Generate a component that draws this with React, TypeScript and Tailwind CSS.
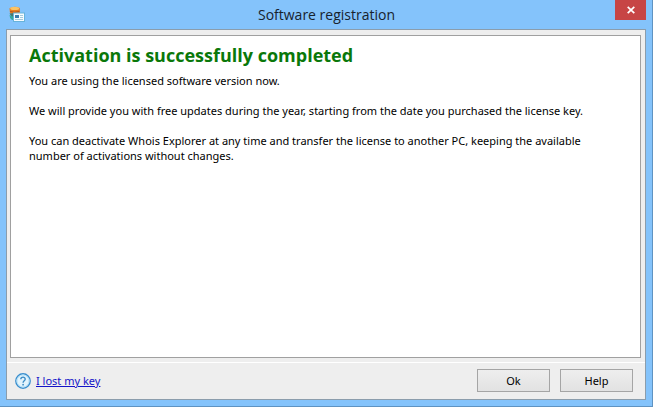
import React from 'react';

const AppIcon: React.FC = () => (
  <svg className="h-4 w-4" viewBox="0 0 16 16" fill="none" aria-hidden="true">
    <path d="M0.500 2.200Q5.500 -0.800 10.800 2V7Q6 9 1 7.200Z" fill="#e87d20" />
    <ellipse cx="5.700" cy="2.400" rx="4.500" ry="1.700" fill="#fbc465" />
    <path d="M1 5.300Q5.500 7.300 10.500 5.300" stroke="#b9591b" />
    <path d="M0.500 7.500L5.500 7V10L3.500 12.500Z" fill="#4a7770" />
    <path d="M0.500 9L4 10.500L5.500 9V14H3Q0.500 12.500 0.500 9Z" fill="#35a9a0" />
    <rect x="4.500" y="7" width="11" height="8.500" fill="#f7fcff" stroke="#67b3da" />
    <rect x="6" y="9" width="4" height="3" fill="#3c7dad" />
    <path d="M11 9.500H14M11 11.500H14M6 13.500H14" stroke="#a6cadb" />
  </svg>
);

const CloseIcon: React.FC = () => (
  <svg className="h-2 w-2" viewBox="0 0 8 8" fill="none" aria-hidden="true">
    <path d="M0.700 0.800L7.300 7.200M7.300 0.800L0.700 7.200" stroke="#fff" strokeWidth="1.700" />
  </svg>
);

const HelpIcon: React.FC = () => (
  <svg className="h-4 w-4" viewBox="0 0 16 16" fill="none" aria-hidden="true">
    <circle cx="8" cy="8" r="7.200" fill="#e3f4fd" stroke="#3b8fce" strokeWidth="1.400" />
    <circle cx="8" cy="8" r="6" stroke="#b5e0f7" />
    <path
      d="M5.800 6.200C5.800 3.400 10.400 3.500 10.200 6.200C10.100 7.800 8.100 7.800 8.100 9.700"
      stroke="#3d8dc6"
      strokeWidth="1.400"
    />
    <circle cx="8.100" cy="11.700" r="0.900" fill="#3d8dc6" />
  </svg>
);

const buttonClass =
  'h-[23px] w-[73px] border border-[#a5a5a5] bg-gradient-to-b from-[#eeeeee] to-[#e2e2e2] text-center hover:border-[#7eb4ea]';

const App: React.FC = () => {
  return (
    <div className="flex h-screen flex-col bg-white pb-[2px] pr-px font-['Noto_Sans','Open_Sans',sans-serif] text-[11px] leading-[15px] text-black">
      <main className="flex flex-1 flex-col border-b border-r border-[#5f93c2] bg-[#84c3fb] pb-[6px] pl-[6px] pr-[6px]">
        {/* Title bar */}
        <header className="flex h-[29px] items-start justify-between">
          <div className="flex w-8 pl-[3px] pt-[6px]">
            <AppIcon />
          </div>
          <h1 className="pt-1 font-['Open_Sans',sans-serif] text-sm leading-[22px] text-[#17222d]">
            Software registration
          </h1>
          <button
            type="button"
            aria-label="Close"
            className="flex h-5 w-[31px] items-center justify-center bg-[#c74545] hover:bg-[#e04343]"
          >
            <CloseIcon />
          </button>
        </header>

        <div className="flex flex-1 flex-col border border-[#8b9dac] bg-[#eeeeee]">
          {/* Message */}
          <section className="ml-[3px] mr-1 mt-[5px] flex-1 border border-[#a0a0a0] bg-white px-[18px] py-2">
            <h2 className="font-['Open_Sans',sans-serif] text-lg font-bold leading-[22px] text-[#0a780a]">
              Activation is successfully completed
            </h2>
            <p className="mt-[7px]">You are using the licensed software version now.</p>
            <p className="mt-[15px]">
              We will provide you with free updates during the year, starting from the date you
              purchased the license key.
            </p>
            <p className="mt-[15px]">
              You can deactivate Whois Explorer at any time and transfer the license to another PC,
              keeping the available number of activations without changes.
            </p>
          </section>

          {/* Footer */}
          <footer className="mt-1 flex items-center justify-between border-t border-white pb-[7px] pl-2 pr-3 pt-[6px]">
            <a href="#lost-key" className="flex items-center gap-[5px] text-[#1414c8]">
              <HelpIcon />
              <span className="underline">I lost my key</span>
            </a>
            <div className="flex gap-[10px]">
              <button type="button" className={buttonClass}>
                Ok
              </button>
              <button type="button" className={buttonClass}>
                Help
              </button>
            </div>
          </footer>
        </div>
      </main>
    </div>
  );
};

export default App;
